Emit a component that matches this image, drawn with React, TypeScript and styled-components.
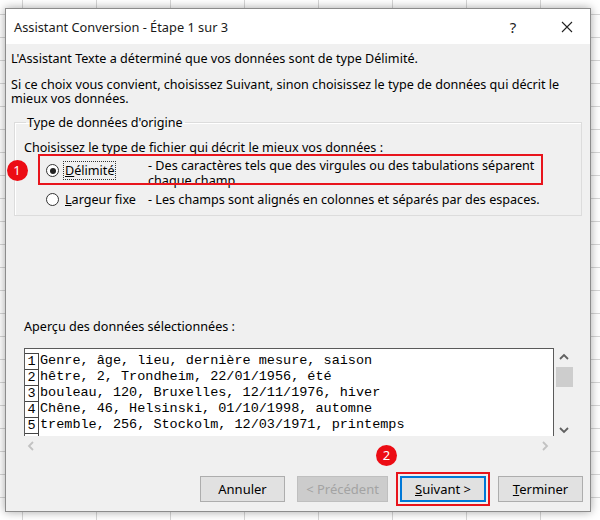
import styled, { createGlobalStyle } from "styled-components";

const GlobalStyle = createGlobalStyle`
  html, body {
    margin: 0;
    padding: 0;
  }
  body {
    width: 600px;
    height: 520px;
    overflow: hidden;
    background-color: #ffffff;
    background-image:
      linear-gradient(#d6d6d6 1px, transparent 1px),
      linear-gradient(90deg, #d6d6d6 1px, transparent 1px);
    background-size: 74px 23px;
    background-position: 22px 14px;
    font-family: "Segoe UI", "Noto Sans", sans-serif;
  }
`;

const Win = styled.div`
  margin: 8px 0 0 5px;
  width: 584px;
  height: 502px;
  border: 1px solid #8c8c8c;
  box-shadow: 0 0 9px rgba(0, 0, 0, 0.35);
  display: flex;
  flex-direction: column;
  background: #f0f0f0;
  font-size: 12.6px;
  color: #000;
`;

const TitleBar = styled.div`
  height: 35px;
  flex: none;
  background: #ffffff;
  display: flex;
  align-items: center;
  padding-left: 8px;
`;

const Title = styled.div`
  flex: 1;
  font-size: 12.8px;
  color: #1a1a1a;
`;

const TitleBtn = styled.div<{ $mr: number }>`
  width: 46px;
  height: 35px;
  margin-right: ${(p) => p.$mr}px;
  display: flex;
  align-items: center;
  justify-content: center;
  font-size: 15px;
  color: #222;
`;

const Content = styled.div`
  flex: 1;
  display: flex;
  flex-direction: column;
  padding: 8px 7px 8px 5px;
  line-height: 15px;
`;

const Para = styled.p<{ $mt: number }>`
  margin: ${(p) => p.$mt}px 0 0 0;
  line-height: 14px;
`;

const Group = styled.fieldset`
  margin: 9px 0 0 3px;
  width: 568px;
  height: 101px;
  box-sizing: border-box;
  padding: 12px 0 0 9px;
  border: 1px solid #dcdcdc;
  box-shadow: inset 1px 1px 0 #ffffff;
`;

const Legend = styled.legend`
  padding: 0 2px 0 1px;
  margin-left: 2px;
  font-size: 12.6px;
`;

const Hint = styled.div`
  margin-top: -2px;
`;

const OptionWrap = styled.div`
  position: relative;
`;

const OptionRow = styled.div<{ $mt: number }>`
  display: flex;
  align-items: flex-start;
  margin-top: ${(p) => p.$mt}px;
  padding-left: 22px;
`;

const Radio = styled.span<{ $on?: boolean }>`
  width: 11px;
  height: 11px;
  border: 1px solid #333;
  border-radius: 50%;
  background: #fff;
  flex: none;
  margin-top: ${(p) => (p.$on ? 6 : 1)}px;
  display: flex;
  align-items: center;
  justify-content: center;
  &::after {
    content: "";
    width: 6px;
    height: 6px;
    border-radius: 50%;
    background: ${(p) => (p.$on ? "#222" : "transparent")};
  }
`;

const Label = styled.span<{ $focus?: boolean }>`
  width: 85px;
  flex: none;
  margin-left: 4px;
  margin-top: ${(p) => (p.$focus ? 5 : 0)}px;
  & > span {
    padding: 0 1px;
    border: 1px dotted ${(p) => (p.$focus ? "#333" : "transparent")};
  }
`;

const Desc = styled.span`
  flex: 1;
`;

const Highlight = styled.div<{ $w: number; $h: number }>`
  position: absolute;
  width: ${(p) => p.$w}px;
  height: ${(p) => p.$h}px;
  border: 2px solid #e8141c;
  box-sizing: border-box;
  pointer-events: none;
`;

const HlOption = styled(Highlight)`
  left: 14px;
  top: -4px;
`;

const Badge = styled.div`
  position: absolute;
  width: 21px;
  height: 21px;
  border-radius: 50%;
  background: #ec0c14;
  color: #fff;
  font-size: 13px;
  display: flex;
  align-items: center;
  justify-content: center;
`;

const Badge1 = styled(Badge)`
  left: -17.5px;
  top: 2px;
`;

const Badge2 = styled(Badge)`
  left: -24px;
  top: -31px;
`;

const PreviewLabel = styled.div`
  margin-top: 103px;
  padding-left: 13px;
`;

const Preview = styled.div`
  margin: 14px 0 0 13px;
  display: flex;
`;

const PreviewMain = styled.div`
  width: 530px;
  display: flex;
  flex-direction: column;
`;

const Sheet = styled.div`
  height: 88px;
  box-sizing: border-box;
  border: 1px solid #5a5a5a;
  border-bottom: none;
  background: #fff;
  overflow: hidden;
  padding-top: 4px;
  font-family: "Liberation Mono", "Courier New", monospace;
  font-size: 13.5px;
  line-height: 16px;
`;

const Line = styled.div`
  display: flex;
  white-space: pre;
`;

const LineNo = styled.span`
  width: 14px;
  flex: none;
  box-sizing: border-box;
  border: 1px solid #444;
  border-left: none;
  border-bottom: none;
  text-align: center;
  margin-right: 1px;
  line-height: 15px;
`;

const HScroll = styled.div`
  height: 20px;
  display: flex;
  align-items: center;
  justify-content: space-between;
  padding: 0 3px 0 2px;
`;

const VScroll = styled.div`
  width: 18px;
  margin-left: 1px;
  height: 88px;
  display: flex;
  flex-direction: column;
  align-items: center;
  padding-top: 4px;
  box-sizing: border-box;
`;

const Thumb = styled.div`
  width: 17px;
  height: 20px;
  background: #cdcdcd;
  margin-top: 3px;
`;

const Spacer = styled.div`
  flex: 1;
`;

const Buttons = styled.div`
  display: flex;
  justify-content: flex-end;
  gap: 12px;
  margin-bottom: 1px;
`;

const Btn = styled.div<{ $disabled?: boolean; $default?: boolean; $w?: number }>`
  width: ${(p) => p.$w ?? 85}px;
  height: 26px;
  box-sizing: border-box;
  display: flex;
  align-items: center;
  justify-content: center;
  font-size: 13px;
  background: ${(p) => (p.$disabled ? "#cccccc" : "#e1e1e1")};
  color: ${(p) => (p.$disabled ? "#a3a3a3" : "#000")};
  border: ${(p) =>
    p.$default ? "2px solid #0078d7" : `1px solid ${p.$disabled ? "#bfbfbf" : "#adadad"}`};
`;

const BtnWrap = styled.div`
  position: relative;
`;

const HlBtn = styled(Highlight)`
  left: -4px;
  top: -4px;
`;

const Chevron = ({ dir, color = "#606060" }: { dir: "up" | "down" | "left" | "right"; color?: string }) => {
  const d = {
    up: "M2 7 L6 3 L10 7",
    down: "M2 4 L6 8 L10 4",
    left: "M7 2 L3 6 L7 10",
    right: "M4 2 L8 6 L4 10",
  }[dir];
  return (
    <svg width="12" height="12" viewBox="0 0 12 12">
      <path d={d} fill="none" stroke={color} strokeWidth="1.8" />
    </svg>
  );
};

const rows = [
  "Genre, âge, lieu, dernière mesure, saison",
  "hêtre, 2, Trondheim, 22/01/1956, été",
  "bouleau, 120, Bruxelles, 12/11/1976, hiver",
  "Chêne, 46, Helsinski, 01/10/1998, automne",
  "tremble, 256, Stockolm, 12/03/1971, printemps",
];

export default function App() {
  return (
    <>
      <GlobalStyle />
      <Win>
        <TitleBar>
          <Title>Assistant Conversion - Étape 1 sur 3</Title>
          <TitleBtn $mr={8}>?</TitleBtn>
          <TitleBtn $mr={0}>
            <svg width="12" height="12" viewBox="0 0 12 12">
              <path d="M1 1 L11 11 M11 1 L1 11" stroke="#222" strokeWidth="1.1" />
            </svg>
          </TitleBtn>
        </TitleBar>
        <Content>
          <Para $mt={0}>L'Assistant Texte a déterminé que vos données sont de type Délimité.</Para>
          <Para $mt={12}>
            Si ce choix vous convient, choisissez Suivant, sinon choisissez le type de données qui décrit le
            <br />
            mieux vos données.
          </Para>
          <Group>
            <Legend>Type de données d'origine</Legend>
            <Hint>Choisissez le type de fichier qui décrit le mieux vos données :</Hint>
            <OptionWrap>
              <OptionRow $mt={3}>
                <Radio $on />
                <Label $focus>
                  <span>
                    <u>D</u>élimité
                  </span>
                </Label>
                <Desc>
                  - Des caractères tels que des virgules ou des tabulations séparent
                  <br />
                  chaque champ.
                </Desc>
              </OptionRow>
              <HlOption $w={505} $h={31} />
              <Badge1>1</Badge1>
            </OptionWrap>
            <OptionRow $mt={4}>
              <Radio />
              <Label>
                <span>
                  <u>L</u>argeur fixe
                </span>
              </Label>
              <Desc>- Les champs sont alignés en colonnes et séparés par des espaces.</Desc>
            </OptionRow>
          </Group>
          <PreviewLabel>Aperçu des données sélectionnées :</PreviewLabel>
          <Preview>
            <PreviewMain>
              <Sheet>
                {rows.map((r, i) => (
                  <Line key={i}>
                    <LineNo>{i + 1}</LineNo>
                    {r}
                  </Line>
                ))}
                <Line>
                  <LineNo> </LineNo>
                </Line>
              </Sheet>
              <HScroll>
                <Chevron dir="left" color="#c2c2c2" />
                <Chevron dir="right" color="#c2c2c2" />
              </HScroll>
            </PreviewMain>
            <VScroll>
              <Chevron dir="up" />
              <Thumb />
              <Spacer />
              <Chevron dir="down" />
            </VScroll>
          </Preview>
          <Spacer />
          <Buttons>
            <Btn>Annuler</Btn>
            <Btn $disabled $w={91}>&lt; Précédent</Btn>
            <BtnWrap>
              <Btn $default $w={86}>
                <span>
                  <u>S</u>uivant &gt;
                </span>
              </Btn>
              <HlBtn $w={94} $h={34} />
              <Badge2>2</Badge2>
            </BtnWrap>
            <Btn>
              <span>
                <u>T</u>erminer
              </span>
            </Btn>
          </Buttons>
        </Content>
      </Win>
    </>
  );
}
